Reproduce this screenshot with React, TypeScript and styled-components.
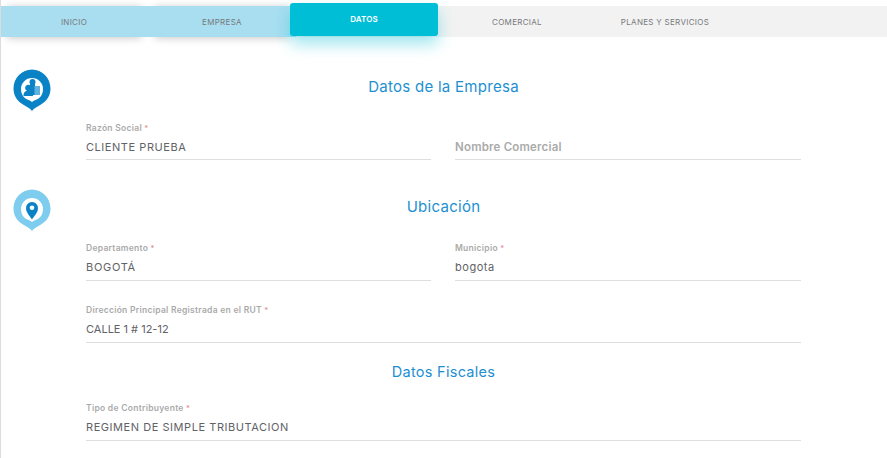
import type { ReactNode } from "react";
import styled, { createGlobalStyle } from "styled-components";

const FONT = `"Inter", "DejaVu Sans", "Liberation Sans", sans-serif`;

const GlobalStyle = createGlobalStyle`
  html, body {
    margin: 0;
    background: #fff;
    font-family: ${FONT};
    overflow: hidden;
  }
`;

const Page = styled.div`
  height: 458px;
  box-sizing: border-box;
  padding-top: 6px;
  border-left: 1px solid #dcdcdc;
  overflow: hidden;
`;

const TabBar = styled.nav`
  display: flex;
  height: 31px;
  margin-left: -1px;
  background: #f2f2f2;
  isolation: isolate;
`;

const Tab = styled.a<{ $done?: boolean; $active?: boolean }>`
  position: relative;
  flex: 0 0 148px;
  display: flex;
  align-items: center;
  justify-content: center;
  box-sizing: border-box;
  font-size: 8px;
  letter-spacing: 0.3px;
  color: #77797c;
  ${(p) =>
    p.$done &&
    `
    background: #a8def0;
    &::before {
      content: "";
      position: absolute;
      inset: 0 7px;
      z-index: -1;
      box-shadow: 0 1px 8px rgba(0, 0, 0, 0.22);
    }
  `}
  ${(p) =>
    p.$active &&
    `
    z-index: 1;
    left: -6px;
    top: -3px;
    height: 33px;
    margin-right: -1px;
    padding-bottom: 1px;
    border-radius: 3px;
    background: #00bed6;
    color: #fff;
    font-weight: 600;
    letter-spacing: 0.1px;
    box-shadow: 0 8px 16px rgba(0, 190, 214, 0.38);
  `}
`;

const Section = styled.section`
  display: grid;
  grid-template-columns: 85px 715px;
`;

const IconColumn = styled.div<{ $top: number }>`
  padding: ${(p) => p.$top}px 0 0 12px;
  line-height: 0;
`;

const Content = styled.div`
  display: flex;
  flex-direction: column;
`;

const Title = styled.h2<{ $top: number; $size?: number }>`
  margin: ${(p) => p.$top}px 0 0;
  height: 20px;
  line-height: 20px;
  font-size: ${(p) => p.$size ?? 15}px;
  font-weight: 400;
  letter-spacing: 0.28px;
  text-align: center;
  color: #1d8fd1;
`;

const Row = styled.div<{ $top: number }>`
  display: grid;
  grid-template-columns: 345px 346px;
  justify-content: space-between;
  margin-top: ${(p) => p.$top}px;
`;

const Field = styled.div<{ $wide?: boolean; $pad?: number }>`
  display: flex;
  flex-direction: column;
  padding-bottom: ${(p) => p.$pad ?? 3}px;
  border-bottom: 1px solid #dedede;
  grid-column: ${(p) => (p.$wide ? "1 / -1" : "auto")};
`;

const Label = styled.label`
  height: 12px;
  line-height: 12px;
  font-size: 8.5px;
  font-weight: 600;
  letter-spacing: 0.28px;
  color: #aaaaaa;

  b {
    color: #e08a92;
    font-size: 7.5px;
    font-weight: 500;
  }
`;

const Value = styled.div<{ $top: number; $empty?: boolean; $spacing?: number }>`
  margin-top: ${(p) => p.$top}px;
  height: 20px;
  line-height: 20px;
  font-size: ${(p) => (p.$empty ? 11.5 : 11)}px;
  font-weight: ${(p) => (p.$empty ? 600 : 400)};
  letter-spacing: ${(p) => p.$spacing ?? (p.$empty ? 0.2 : 0.55)}px;
  color: ${(p) => (p.$empty ? "#aaaaaa" : "#5f6266")};
`;

const Pin = ({ ring, children }: { ring: string; children: ReactNode }) => (
  <svg width="38" height="42" viewBox="0 0 38 42">
    <path
      d="M19 42 C17.5 39.5 14 38 10 35.5 C4 32 0.5 26.5 0.5 19.5 C0.5 9 9 0.5 19 0.5 C29 0.5 37.5 9 37.5 19.5 C37.5 26.5 34 32 28 35.5 C24 38 20.5 39.5 19 42 Z"
      fill={ring}
    />
    <path
      d="M19 33 C17.5 31.5 15 31 12.5 29.5 C9.5 27.5 8 24 8 20 A11 11 0 0 1 30 20 C30 24 28.5 27.5 25.5 29.5 C23 31 20.5 31.5 19 33 Z"
      fill="#fff"
    />
    {children}
  </svg>
);

const BuildingsGlyph = () => (
  <g>
    <rect x="17" y="13" width="5" height="13" fill="#0a83c6" />
    <circle cx="19.5" cy="13" r="3" fill="#0a83c6" />
    <rect x="21.5" y="17" width="5.5" height="9" fill="#5fb2e0" />
    <path
      d="M10.5 27 C10.5 23.5 12 22.3 14 21.8 A3.2 3.2 0 1 1 16.6 21.8 C18.5 22.3 20 23.5 20 27 Z"
      fill="#0a83c6"
    />
  </g>
);

const PinGlyph = () => (
  <g>
    <path
      d="M19 30.5 C16.5 26.5 13 23.5 13 19 A6 6 0 0 1 25 19 C25 23.5 21.5 26.5 19 30.5 Z"
      fill="#0a83c6"
    />
    <circle cx="19" cy="18.7" r="2.3" fill="#fff" />
  </g>
);

const Req = () => <b> *</b>;

export default function App() {
  return (
    <>
      <GlobalStyle />
      <Page>
        <TabBar>
          <Tab $done>INICIO</Tab>
          <Tab $done>EMPRESA</Tab>
          <Tab $active>DATOS</Tab>
          <Tab>COMERCIAL</Tab>
          <Tab>PLANES Y SERVICIOS</Tab>
        </TabBar>

        <Section>
          <IconColumn $top={32}>
            <Pin ring="#0a83c6">
              <BuildingsGlyph />
            </Pin>
          </IconColumn>
          <Content>
            <Title $top={40}>Datos de la Empresa</Title>
            <Row $top={25}>
              <Field $pad={2}>
                <Label>
                  Razón Social
                  <Req />
                </Label>
                <Value $top={3}>CLIENTE PRUEBA</Value>
              </Field>
              <Field $pad={2}>
                <Label />
                <Value $top={3} $empty>
                  Nombre Comercial
                </Value>
              </Field>
            </Row>
          </Content>
        </Section>

        <Section>
          <IconColumn $top={29}>
            <Pin ring="#7fcdee">
              <PinGlyph />
            </Pin>
          </IconColumn>
          <Content>
            <Title $top={37}>Ubicación</Title>
            <Row $top={25}>
              <Field>
                <Label>
                  Departamento
                  <Req />
                </Label>
                <Value $top={3} $spacing={0.7}>
                  BOGOTÁ
                </Value>
              </Field>
              <Field>
                <Label>
                  Municipio
                  <Req />
                </Label>
                <Value $top={3}>bogota</Value>
              </Field>
            </Row>
            <Row $top={23}>
              <Field $wide>
                <Label>
                  Dirección Principal Registrada en el RUT
                  <Req />
                </Label>
                <Value $top={3} $spacing={0}>
                  CALLE 1 # 12-12
                </Value>
              </Field>
            </Row>
            <Title $top={19} $size={14.5}>
              Datos Fiscales
            </Title>
            <Row $top={20}>
              <Field $wide>
                <Label>
                  Tipo de Contribuyente
                  <Req />
                </Label>
                <Value $top={3}>REGIMEN DE SIMPLE TRIBUTACION</Value>
              </Field>
            </Row>
          </Content>
        </Section>
      </Page>
    </>
  );
}
